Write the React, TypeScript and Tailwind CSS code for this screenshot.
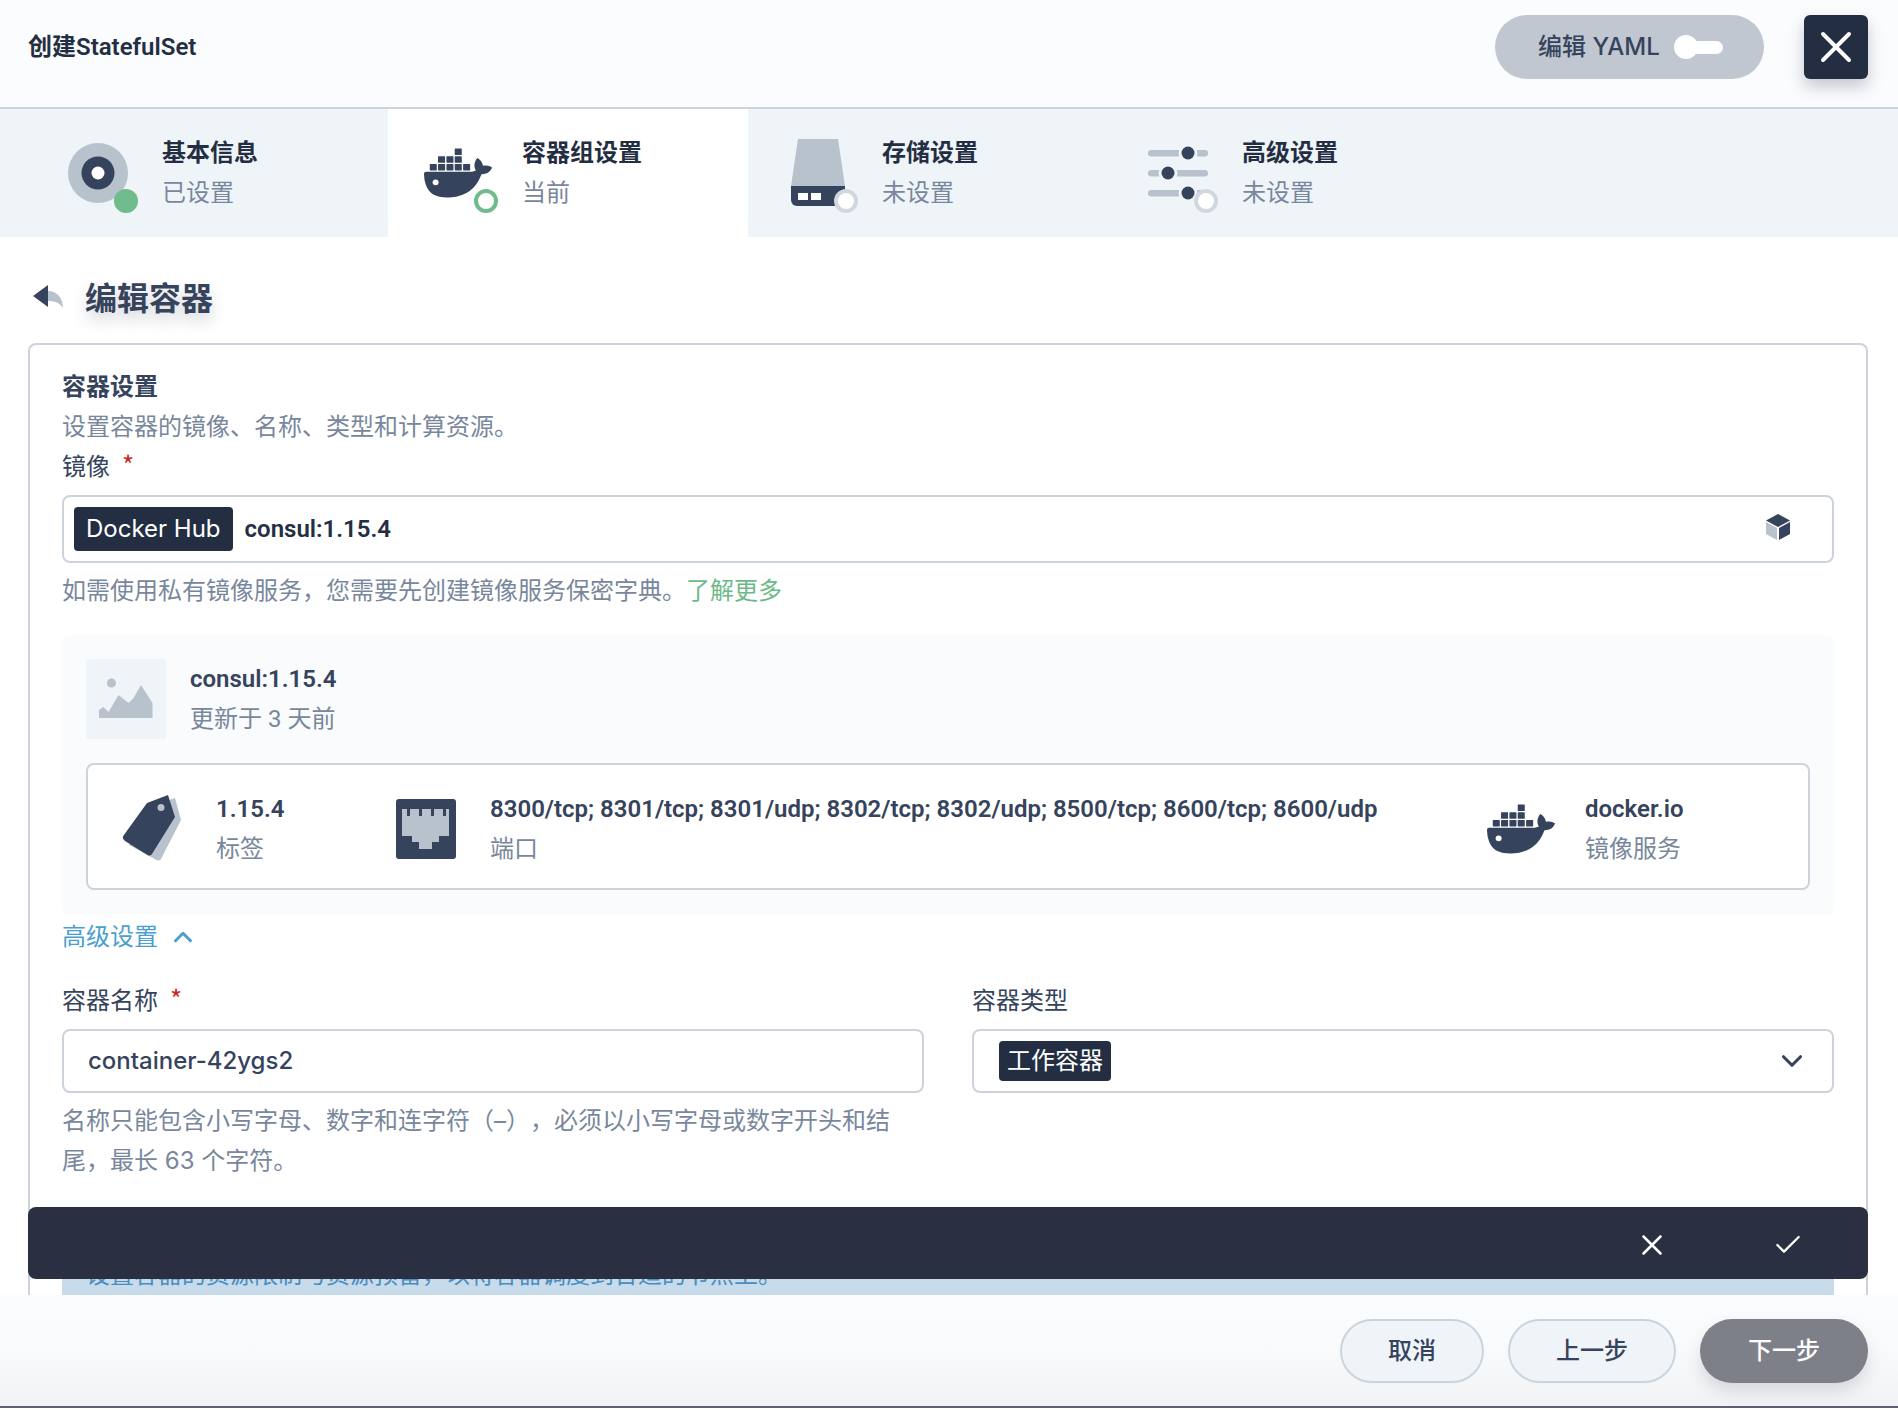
import React from 'react';
import { X, Check, ChevronUp, ChevronDown } from 'lucide-react';

const DOCKER_PATH =
  'M13.983 11.078h2.119a.186.186 0 00.186-.185V9.006a.186.186 0 00-.186-.186h-2.119a.185.185 0 00-.185.185v1.888c0 .102.083.185.185.185m-2.954-5.43h2.118a.186.186 0 00.186-.186V3.574a.186.186 0 00-.186-.185h-2.118a.185.185 0 00-.185.185v1.888c0 .102.082.185.185.186m0 2.716h2.118a.187.187 0 00.186-.186V6.29a.186.186 0 00-.186-.185h-2.118a.185.185 0 00-.185.185v1.887c0 .102.082.185.185.186m-2.93 0h2.12a.186.186 0 00.184-.186V6.29a.185.185 0 00-.185-.185H8.1a.185.185 0 00-.185.185v1.887c0 .102.083.185.185.186m-2.964 0h2.119a.186.186 0 00.185-.186V6.29a.185.185 0 00-.185-.185H5.136a.186.186 0 00-.186.185v1.887c0 .102.084.185.186.186m5.893 2.715h2.118a.186.186 0 00.186-.185V9.006a.186.186 0 00-.186-.186h-2.118a.185.185 0 00-.185.185v1.888c0 .102.082.185.185.185m-2.93 0h2.12a.185.185 0 00.184-.185V9.006a.185.185 0 00-.184-.186h-2.12a.185.185 0 00-.184.185v1.888c0 .102.083.185.185.185m-2.964 0h2.119a.185.185 0 00.185-.185V9.006a.185.185 0 00-.184-.186h-2.12a.186.186 0 00-.186.186v1.887c0 .102.084.185.186.185m-2.92 0h2.12a.185.185 0 00.184-.185V9.006a.185.185 0 00-.184-.186h-2.12a.185.185 0 00-.184.185v1.888c0 .102.082.185.185.185M23.763 9.89c-.065-.051-.672-.51-1.954-.51-.338.001-.676.03-1.01.087-.248-1.7-1.653-2.53-1.716-2.566l-.344-.199-.226.327c-.284.438-.49.922-.612 1.43-.23.97-.09 1.882.403 2.661-.595.332-1.55.413-1.744.42H.751a.751.751 0 00-.75.748 11.376 11.376 0 00.692 4.062c.545 1.428 1.355 2.48 2.41 3.124 1.18.723 3.1 1.137 5.275 1.137.983.003 1.963-.086 2.93-.266a12.248 12.248 0 003.823-1.389c.98-.567 1.86-1.288 2.61-2.136 1.252-1.418 1.998-2.997 2.553-4.4h.221c1.372 0 2.215-.549 2.68-1.009.309-.293.55-.65.707-1.046l.098-.288Z';

const DockerMark = ({ x = 0, y = 0, width }: { x?: number; y?: number; width: number }) => (
  <svg x={x} y={y} width={width} height={width} viewBox="0 0 24 24">
    <path d={DOCKER_PATH} fill="#36435c" />
    <circle cx="4.1" cy="15.3" r="1.05" fill="#fff" />
  </svg>
);

const Ring = ({ state }: { state: 'done' | 'current' | 'todo' }) => {
  if (state === 'done') return <circle cx="70" cy="70" r="12" fill="#6fbb8b" />;
  if (state === 'current') return <circle cx="70" cy="70" r="10" fill="#fff" stroke="#6fbb8b" strokeWidth="4" />;
  return <circle cx="70" cy="70" r="10" fill="#fff" stroke="#d1d7df" strokeWidth="4" />;
};

const StepIcon = ({ name }: { name: string }) => (
  <svg width="84" height="84" viewBox="0 0 84 84" className="shrink-0 ml-[28px] mr-[23px]">
    {name === 'base' && (
      <>
        <circle cx="42" cy="42" r="30" fill="#b7c2cc" />
        <circle cx="42" cy="42" r="16.5" fill="#36435c" />
        <circle cx="42" cy="42" r="6.5" fill="#fff" />
        <Ring state="done" />
      </>
    )}
    {name === 'docker' && (
      <>
        <DockerMark x={8} y={8} width={68} />
        <Ring state="current" />
      </>
    )}
    {name === 'disk' && (
      <>
        <path d="M22 8h40l7 47H15z" fill="#b7c2cc" />
        <path d="M15 55h54v14a6 6 0 01-6 6H21a6 6 0 01-6-6z" fill="#36435c" />
        <rect x="22" y="62" width="10" height="7" fill="#fff" />
        <rect x="35" y="62" width="10" height="7" fill="#fff" />
        <Ring state="todo" />
      </>
    )}
    {name === 'sliders' && (
      <>
        <rect x="12" y="19" width="60" height="6.5" rx="3.2" fill="#b7c2cc" />
        <rect x="12" y="39" width="60" height="6.5" rx="3.2" fill="#b7c2cc" />
        <rect x="12" y="59" width="60" height="6.5" rx="3.2" fill="#b7c2cc" />
        <circle cx="52" cy="22" r="6.5" fill="#36435c" stroke="#eff4f9" strokeWidth="6" paintOrder="stroke" />
        <circle cx="32" cy="42" r="6.5" fill="#36435c" stroke="#eff4f9" strokeWidth="6" paintOrder="stroke" />
        <circle cx="52" cy="62" r="6.5" fill="#36435c" stroke="#eff4f9" strokeWidth="6" paintOrder="stroke" />
        <Ring state="todo" />
      </>
    )}
  </svg>
);

const steps = [
  { icon: 'base', title: '基本信息', sub: '已设置' },
  { icon: 'docker', title: '容器组设置', sub: '当前', active: true },
  { icon: 'disk', title: '存储设置', sub: '未设置' },
  { icon: 'sliders', title: '高级设置', sub: '未设置' },
];

const Required = () => <span className="ml-[12px] text-[#ca2621] leading-none font-['Noto_Sans_CJK_SC'] text-[26px]">*</span>;

const TagIcon = () => (
  <svg width="60" height="68" viewBox="0 0 60 68" className="shrink-0">
    <path d="M30 11L53 3l6 22-20 39c-1 1.500-3 2-4.500 1L7 50z" fill="#b7c2cc" />
    <path d="M25 8L46 0l7 22-23 37c-1 1.500-3 2-4.500 1L3 46c-2-1.500-2.500-3-1.800-5zM39 9a3.500 3.500 0 100 7 3.500 3.500 0 000-7z" fill="#36435c" fillRule="evenodd" />
  </svg>
);

const PortIcon = () => (
  <svg width="60" height="60" viewBox="0 0 60 60" className="shrink-0">
    <rect width="60" height="60" rx="3" fill="#36435c" />
    <path d="M6 10h47v27H43v6h-7v7H23v-7h-7v-6H6z" fill="#b7c2cc" />
    <rect x="11" y="10" width="3" height="7" fill="#36435c" />
    <rect x="23" y="10" width="3" height="7" fill="#36435c" />
    <rect x="35" y="10" width="3" height="7" fill="#36435c" />
    <rect x="47" y="10" width="3" height="7" fill="#36435c" />
  </svg>
);

const InfoItem = ({ icon, value, label, className }: { icon: React.ReactNode; value: string; label: string; className: string }) => (
  <div className={`flex items-center ${className}`}>
    {icon}
    <div className="min-w-0">
      <div className="h-[40px] leading-[40px] font-semibold text-[#36435c] whitespace-nowrap">{value}</div>
      <div className="h-[40px] leading-[40px] text-[#79879c]">{label}</div>
    </div>
  </div>
);

export default function App() {
  return (
    <div className="w-[1898px] h-[1408px] flex flex-col overflow-hidden bg-white text-[24px] text-[#36435c] [text-spacing-trim:space-all] font-['Roboto','Noto_Sans_CJK_SC',sans-serif]">
      {/* header */}
      <header className="h-[109px] shrink-0 border-b-2 border-[#ccd3db] bg-[#fbfcfe] flex items-start pl-[28px] pr-[30px] pt-[15px]">
        <h1 className="h-[64px] leading-[64px] font-semibold text-[#242e42] flex-1">创建StatefulSet</h1>
        <div className="h-[64px] w-[269px] rounded-full bg-[#c1c7d0] flex items-center pl-[43px]">
          <span className="w-[136px] whitespace-nowrap font-medium font-['Inter','Noto_Sans_CJK_SC',sans-serif]">编辑 YAML</span>
          <span className="relative w-[49px] h-[24px] flex items-center">
            <span className="w-[24px] h-[24px] rounded-full bg-white" />
            <span className="w-[30px] h-[13px] -ml-[5px] rounded-r-full bg-white" />
          </span>
        </div>
        <button className="ml-[40px] w-[64px] h-[64px] rounded-[6px] bg-[#242e42] text-white flex items-center justify-center shadow-[0_8px_16px_rgba(36,46,66,0.25)]">
          <X size={52} strokeWidth={1.8} />
        </button>
      </header>

      {/* steps */}
      <nav className="h-[128px] shrink-0 bg-[#eff4f9] flex pl-[28px]">
        {steps.map((s) => (
          <div key={s.title} className={`w-[360px] flex items-center ${s.active ? 'bg-white' : ''}`}>
            <StepIcon name={s.icon} />
            <div className="-ml-px">
              <div className="h-[40px] leading-[40px] font-semibold text-[#242e42]">{s.title}</div>
              <div className="h-[40px] leading-[40px] text-[#79879c]">{s.sub}</div>
            </div>
          </div>
        ))}
      </nav>

      {/* form */}
      <main className="relative flex-1 min-h-0 overflow-hidden">
        <div className="flex items-center h-[106px] pl-[33px]">
          <svg width="30" height="24" viewBox="0 0 30 24" className="mt-[13px]">
            <path d="M15 6c9 0 15 7 15 17-4-6-9-7-15-7z" fill="#b7c2cc" />
            <path d="M15 0L0 11l15 11z" fill="#36435c" />
          </svg>
          <h2 className="ml-[22px] text-[32px] font-semibold text-[#36435c] mt-[18px] [text-shadow:0_8px_16px_rgba(36,46,66,0.2)]">编辑容器</h2>
        </div>

        <section className="mx-[28px] mr-[30px] border-2 border-b-0 border-[#ccd3db] rounded-t-[8px] px-[32px] pt-[22px] pb-[40px]">
          <div className="h-[40px] leading-[40px] font-semibold">容器设置</div>
          <div className="h-[40px] leading-[40px] text-[#79879c]">设置容器的镜像、名称、类型和计算资源。</div>
          <div className="h-[40px] leading-[40px]">镜像<Required /></div>

          <div className="mt-[8px] h-[68px] border-2 border-[#ccd3db] rounded-[8px] flex items-center pl-[10px] pr-[41px]">
            <span className="h-[44px] leading-[44px] px-[12px] rounded-[4px] bg-[#242e42] text-white whitespace-nowrap font-['Inter',sans-serif]">Docker Hub</span>
            <span className="ml-[12px] font-semibold text-[#242e42] flex-1">consul:1.15.4</span>
            <svg width="26" height="28" viewBox="0 0 26 28" className="mb-[4px]">
              <path d="M13 1l12 6.500-12 6.500L1 7.500z" fill="#36435c" />
              <path d="M1 9l11 6v12L1 21z" fill="#b7c2cc" />
              <path d="M25 9l-11 6v12l11-6z" fill="#36435c" />
            </svg>
          </div>
          <div className="mt-[8px] h-[40px] leading-[40px] text-[#79879c]">
            如需使用私有镜像服务，您需要先创建镜像服务保密字典。<span className="text-[#6db98a]">了解更多</span>
          </div>

          <div className="mt-[24px] h-[280px] rounded-[8px] bg-[#f9fbfd] px-[24px] pt-[24px]">
            <div className="flex items-center">
              <div className="w-[80px] h-[80px] rounded-[4px] bg-[#eff4f9] flex items-center justify-center">
                <svg width="56" height="46" viewBox="0 0 56 46">
                  <circle cx="13.5" cy="7" r="4.500" fill="#b7c2cc" />
                  <path d="M1 42V34l4.500-3 5 5 10-17 10 8 5-5 7.500-13 11.500 18V42z" fill="#b7c2cc" />
                </svg>
              </div>
              <div className="ml-[24px]">
                <div className="h-[40px] leading-[40px] font-semibold">consul:1.15.4</div>
                <div className="h-[40px] leading-[40px] text-[#79879c]">更新于 3 天前</div>
              </div>
            </div>
            <div className="mt-[24px] h-[127px] border-2 border-[#ccd3db] rounded-[8px] bg-white flex items-center pl-[34px] pt-[4px]">
              <InfoItem icon={<TagIcon />} value="1.15.4" label="标签" className="w-[274px] gap-[34px]" />
              <InfoItem
                icon={<PortIcon />}
                value="8300/tcp; 8301/tcp; 8301/udp; 8302/tcp; 8302/udp; 8500/tcp; 8600/tcp; 8600/udp"
                label="端口"
                className="w-[1091px] gap-[34px]"
              />
              <InfoItem icon={<svg width="68" height="68" viewBox="0 0 68 68" className="shrink-0"><DockerMark width={68} /></svg>} value="docker.io" label="镜像服务" className="gap-[30px]" />
            </div>
          </div>

          <div className="mt-[2px] h-[40px] flex items-center text-[#4a9fd0]">
            高级设置
            <ChevronUp size={30} strokeWidth={2.4} className="ml-[10px]" />
          </div>

          <div className="mt-[24px] grid grid-cols-[862px_862px] gap-x-[48px]">
            <div>
              <div className="h-[40px] leading-[40px]">容器名称<Required /></div>
              <div className="mt-[8px] h-[64px] border-2 border-[#ccd3db] rounded-[8px] flex items-center pl-[24px] text-[#36435c] font-medium font-['Inter',sans-serif]">container-42ygs2</div>
              <div className="mt-[8px] leading-[40px] text-[#79879c] font-['Inter','Noto_Sans_CJK_SC',sans-serif]">名称只能包含小写字母、数字和连字符（–），必须以小写字母或数字开头和结尾，最长 63 个字符。</div>
            </div>
            <div>
              <div className="h-[40px] leading-[40px]">容器类型</div>
              <div className="mt-[8px] h-[64px] border-2 border-[#ccd3db] rounded-[8px] flex items-center pl-[25px] pr-[23px]">
                <span className="h-[40px] leading-[40px] px-[8px] rounded-[4px] bg-[#242e42] text-white flex-none">工作容器</span>
                <span className="flex-1" />
                <ChevronDown size={34} strokeWidth={2.2} />
              </div>
            </div>
          </div>

          <div className="mt-[64px] h-[90px] bg-[#c7dbeb] pl-[24px] pt-[10px] leading-[40px] text-[#4a8ec0]">
            设置容器的资源限制与资源预留，以将容器调度到合适的节点上。
          </div>
        </section>

        <div className="absolute left-[28px] right-[30px] bottom-[16px] h-[72px] rounded-[8px] bg-[#2a3042] text-white flex items-center justify-end pr-[12px] pt-[3px]">
          <button className="w-[136px] flex justify-center"><X size={34} strokeWidth={1.8} /></button>
          <button className="w-[136px] flex justify-center"><Check size={32} strokeWidth={1.7} /></button>
        </div>
      </main>

      {/* footer */}
      <footer className="h-[113px] shrink-0 border-b-2 border-[#5b6072] bg-linear-to-b from-[#fbfcfe] via-[#f9fafc] to-[#f1f2f4] flex justify-end gap-[24px] pt-[24px] pr-[30px]">
        <button className="h-[64px] px-[46px] rounded-full border-2 border-[#ccd3db] bg-[#eff4f9] font-medium">取消</button>
        <button className="h-[64px] px-[46px] rounded-full border-2 border-[#ccd3db] bg-[#eff4f9] font-medium">上一步</button>
        <button className="h-[64px] px-[48px] rounded-full bg-[#7e8089] text-white font-medium shadow-[0_8px_16px_rgba(36,46,66,0.15)]">下一步</button>
      </footer>
    </div>
  );
}
